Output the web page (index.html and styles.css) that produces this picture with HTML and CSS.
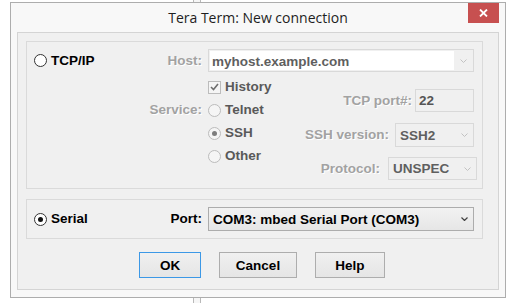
FILE: index.html
```html
<!DOCTYPE html>
<html lang="en">
<head>
    <meta charset="UTF-8">
    <title>Tera Term: New connection</title>
    <link rel="stylesheet" href="styles.css">
</head>
<body>
    <div class="strip"></div>
    <div class="window">
        <div class="titlebar">
            <span></span>
            <span class="title">Tera Term: New connection</span>
            <div class="close">
                <svg width="9" height="8" viewBox="0 0 9 8"><path d="M1 0.5 L8 7.5 M8 0.5 L1 7.5" stroke="#fff" stroke-width="1.8" fill="none"/></svg>
            </div>
        </div>
        <div class="client">
            <div class="group tcp">
                <div class="host-row">
                    <div class="lead">
                        <span class="choice"><span class="radio"></span>TCP/IP</span>
                        <span class="lbl off">Host:</span>
                    </div>
                    <div class="combo off host">
                        <span class="edit">myhost.example.com</span>
                        <span class="arrow"><svg width="7" height="4" viewBox="0 0 7 4"><path d="M0.5 0.5 L3.5 3.5 L6.5 0.5" stroke="#c2c2c2" fill="none"/></svg></span>
                    </div>
                </div>
                <div class="body">
                    <div class="lead service"><span class="lbl off">Service:</span></div>
                    <div class="options">
                        <span class="choice dim"><span class="check"><svg width="9" height="8" viewBox="0 0 9 8"><path d="M1 4 L3.5 6.5 L8 1" stroke="#6e6e6e" stroke-width="1.6" fill="none"/></svg></span>History</span>
                        <span class="choice dim"><span class="radio off"></span>Telnet</span>
                        <span class="choice dim"><span class="radio off on"></span>SSH</span>
                        <span class="choice dim"><span class="radio off"></span>Other</span>
                    </div>
                    <div class="params">
                        <div class="param">
                            <span class="lbl off">TCP port#:</span>
                            <div class="field port">22</div>
                        </div>
                        <div class="param ssh">
                            <span class="lbl off">SSH version:</span>
                            <div class="combo off version">
                                <span class="value">SSH2</span>
                                <span class="arrow"><svg width="7" height="4" viewBox="0 0 7 4"><path d="M0.5 0.5 L3.5 3.5 L6.5 0.5" stroke="#c2c2c2" fill="none"/></svg></span>
                            </div>
                        </div>
                        <div class="param proto">
                            <span class="lbl off">Protocol:</span>
                            <div class="combo off protocol">
                                <span class="value">UNSPEC</span>
                                <span class="arrow"><svg width="7" height="4" viewBox="0 0 7 4"><path d="M0.5 0.5 L3.5 3.5 L6.5 0.5" stroke="#c2c2c2" fill="none"/></svg></span>
                            </div>
                        </div>
                    </div>
                </div>
            </div>
            <div class="group serial">
                <div class="lead">
                    <span class="choice"><span class="radio on"></span>Serial</span>
                    <span class="lbl">Port:</span>
                </div>
                <div class="combo portsel">
                    <span class="value">COM3: mbed Serial Port (COM3)</span>
                    <span class="arrow"><svg width="7" height="4" viewBox="0 0 7 4"><path d="M0.5 0.5 L3.5 3.5 L6.5 0.5" stroke="#404040" stroke-width="1.2" fill="none"/></svg></span>
                </div>
            </div>
            <div class="buttons">
                <button class="btn ok">OK</button>
                <button class="btn cancel">Cancel</button>
                <button class="btn help">Help</button>
            </div>
        </div>
    </div>
</body>
</html>
```

FILE: styles.css
```css
body {
    margin: 0;
    padding: 2px 0 0 10px;
    width: 514px;
    height: 303px;
    box-sizing: border-box;
    overflow: hidden;
    position: relative;
    background: #fff;
    font-family: "Liberation Sans", Arial, sans-serif;
    font-size: 13.5px;
    font-weight: bold;
    color: #000;
}
.strip {
    position: absolute;
    left: 193px;
    top: 0;
    width: 8px;
    height: 303px;
    box-sizing: border-box;
    border-left: 1px solid #b9b9b9;
    border-right: 1px solid #b9b9b9;
    background: #f6f6f6;
}
.window {
    position: relative;
    width: 496px;
    height: 296px;
    box-sizing: border-box;
    border: 1px solid #adadad;
    background: #f8f8f8;
    padding: 0 6px 7px;
    display: flex;
    flex-direction: column;
}
.titlebar {
    height: 29px;
    display: grid;
    grid-template-columns: 1fr auto 1fr;
    align-items: start;
}
.title {
    font-family: "Open Sans", sans-serif;
    font-weight: normal;
    font-size: 14px;
    line-height: 29px;
    color: #1e1e1e;
}
.close {
    justify-self: end;
    width: 31px;
    height: 20px;
    background: #c75050;
    display: flex;
    align-items: center;
    justify-content: center;
}
.client {
    flex: 1;
    border: 1px solid #d4d4d4;
    background: #f0f0f0;
    padding: 8px 0 0 8px;
}
.group {
    width: 457px;
    box-sizing: border-box;
    border: 1px solid #dadada;
}
.tcp {
    height: 148px;
    padding: 7px 8px 0 0;
}
.host-row {
    display: flex;
    align-items: center;
    height: 23px;
}
.lead {
    width: 175px;
    flex: none;
    box-sizing: border-box;
    padding-left: 7px;
    margin-right: 6px;
    display: flex;
    align-items: center;
    justify-content: space-between;
}
.choice {
    display: flex;
    align-items: center;
    height: 16px;
    line-height: 16px;
}
.choice.dim {
    color: #595959;
}
.lbl {
    line-height: 16px;
    white-space: nowrap;
}
.lbl.off {
    color: #a2a2a2;
    text-shadow: 1px 1px 0 #fff;
}
.radio {
    width: 13px;
    height: 13px;
    box-sizing: border-box;
    border: 1px solid #333;
    border-radius: 50%;
    background: #fff;
    margin-right: 4px;
    display: flex;
    align-items: center;
    justify-content: center;
}
.radio.on::after {
    content: "";
    width: 5px;
    height: 5px;
    border-radius: 50%;
    background: #111;
}
.radio.off {
    border-color: #bcbcbc;
    background: #f5f5f5;
}
.radio.off.on::after {
    background: #7d7d7d;
}
.check {
    width: 13px;
    height: 13px;
    box-sizing: border-box;
    border: 1px solid #bcbcbc;
    background: #f5f5f5;
    margin-right: 4px;
    display: flex;
    align-items: center;
    justify-content: center;
}
.combo {
    display: flex;
    align-items: center;
    box-sizing: border-box;
    border: 1px solid #acacac;
    background: linear-gradient(#f2f2f2, #e6e6e6);
}
.combo.off {
    border-color: #d9d9d9;
    background: #f0f0f0;
    color: #5f5f5f;
}
.combo .value {
    flex: 1;
    padding-left: 4px;
    white-space: nowrap;
}
.arrow {
    width: 17px;
    flex: none;
    display: flex;
    justify-content: center;
    align-items: center;
}
.host {
    width: 266px;
    height: 23px;
    padding: 1px;
}
.host .edit {
    flex: 1;
    align-self: stretch;
    background: #fff;
    padding-left: 2px;
    line-height: 21px;
    margin-right: 1px;
}
.body {
    display: flex;
    height: 115px;
}
.service {
    align-items: flex-start;
    justify-content: flex-end;
    padding-top: 30px;
}
.options {
    display: flex;
    flex-direction: column;
    gap: 7px;
    padding-top: 7px;
}
.params {
    margin-left: auto;
    padding-top: 17px;
    display: flex;
    flex-direction: column;
    align-items: flex-end;
}
.param {
    display: flex;
    align-items: center;
    height: 23px;
    gap: 3px;
}
.param.ssh {
    margin-top: 11px;
    gap: 6px;
    height: 24px;
}
.param.proto {
    margin-top: 10px;
    gap: 8px;
    margin-right: -3px;
}
.field {
    box-sizing: border-box;
    height: 23px;
    border: 1px solid #d9d9d9;
    background: #f0f0f0;
    color: #555;
    padding-left: 3px;
    line-height: 21px;
}
.port {
    width: 59px;
}
.version {
    width: 79px;
    height: 24px;
}
.protocol {
    width: 89px;
    height: 23px;
}
.serial {
    height: 40px;
    margin-top: 10px;
    display: flex;
    align-items: center;
}
.portsel {
    width: 266px;
    height: 24px;
}
.buttons {
    display: flex;
    gap: 18px;
    margin-top: 13px;
    padding-left: 113px;
}
.btn {
    height: 26px;
    box-sizing: border-box;
    border: 1px solid #adadad;
    background: linear-gradient(#f0f0f0, #e5e5e5);
    font: inherit;
    color: #000;
    padding: 0;
}
.ok {
    width: 62px;
    border-color: #3c98e6;
}
.cancel {
    width: 78px;
}
.help {
    width: 70px;
}
```
